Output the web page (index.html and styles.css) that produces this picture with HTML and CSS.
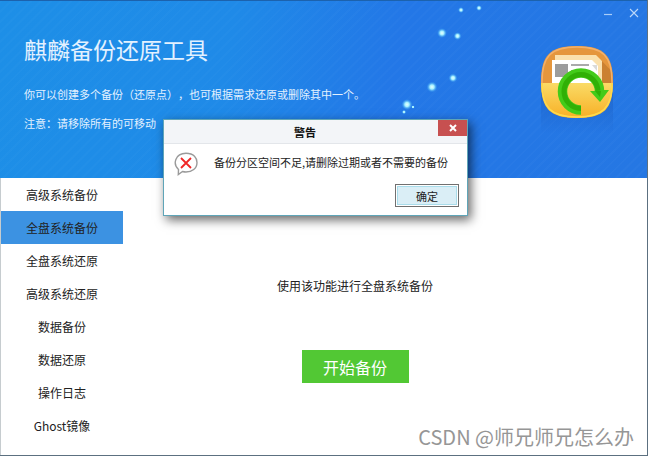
FILE: index.html
```
<!DOCTYPE html>
<html lang="zh-CN">
<head>
  <meta charset="UTF-8" />
  <meta name="viewport" content="width=device-width, initial-scale=1.0"/>
  <title>麒麟备份还原工具</title>
  <link rel="stylesheet" href="styles.css">
</head>
<body>
  <div class="window">
    <header class="banner">
      <svg class="stars" width="100" height="118" viewBox="0 0 100 118" aria-hidden="true">
        <defs>
          <radialGradient id="glow">
            <stop offset="0" stop-color="#e8ffff"/>
            <stop offset="0.4" stop-color="#a5f0ff"/>
            <stop offset="1" stop-color="#2a9cf5" stop-opacity="0"/>
          </radialGradient>
        </defs>
        <g fill="url(#glow)">
          <circle cx="61" cy="9" r="3"/>
          <circle cx="79" cy="7" r="3"/>
          <circle cx="42" cy="32" r="5"/>
          <circle cx="57.5" cy="35" r="4"/>
          <circle cx="53" cy="77" r="4.5"/>
          <circle cx="32" cy="86" r="5.5"/>
          <circle cx="7" cy="103.5" r="5.5"/>
          <circle cx="13" cy="106" r="1.8"/>
          <circle cx="4" cy="111" r="2.2"/>
        </g>
      </svg>

      <div class="intro">
        <h1>麒麟备份还原工具</h1>
        <p>你可以创建多个备份（还原点），也可根据需求还原或删除其中一个。</p>
        <p>注意：请移除所有的可移动</p>
      </div>

      <div class="banner-side">
        <div class="window-controls">
          <button type="button" aria-label="最小化">
            <svg width="10" height="10" viewBox="0 0 10 10"><path d="M1 6.5h8" stroke="#a9cdf7" stroke-width="1.2"/></svg>
          </button>
          <button type="button" aria-label="关闭">
            <svg width="10" height="10" viewBox="0 0 10 10"><path d="M1 1l8 8M9 1l-8 8" stroke="#bcd8f9" stroke-width="1.1"/></svg>
          </button>
        </div>
        <svg class="logo" width="76" height="94" viewBox="0 0 76 94" aria-hidden="true">
          <defs>
            <linearGradient id="pocket" x1="0" y1="0" x2="0" y2="1">
              <stop offset="0" stop-color="#fadb66"/>
              <stop offset="1" stop-color="#f7ad22"/>
            </linearGradient>
            <linearGradient id="shade" x1="0" y1="0" x2="0" y2="1">
              <stop offset="0" stop-color="#1c5fc4" stop-opacity="0.7"/>
              <stop offset="1" stop-color="#1c5fc4" stop-opacity="0"/>
            </linearGradient>
            <clipPath id="tile">
              <path d="M37 2C64 2 73 11 73 38S64 74 37 74 1 65 1 38 10 2 37 2z"/>
            </clipPath>
          </defs>
          <path d="M1 44h72v46H1z" fill="url(#shade)"/>
          <g clip-path="url(#tile)">
            <path d="M0 0h76v40H0z" fill="#e5963c"/>
            <path d="M61 16l14 15v10H56z" fill="#cb8131"/>
            <path d="M15 11h41l6 6v24H15z" fill="#fae0ac"/>
            <path d="M12 16h40l6 6v18H12z" fill="#fff"/>
            <path d="M52 21l5 6v-6z" fill="#dadada"/>
            <path d="M15 20h13v13H15z" fill="#9c9c9c"/>
            <path d="M31 20h18v2H31zM31 26h8v2h-8z" fill="#aaa"/>
            <path d="M0 39h76v37H0z" fill="url(#pocket)"/>
          </g>
          <path d="M37 3C63 3 72 12 72 38S63 73 37 73 2 64 2 38 11 3 37 3z" fill="none" stroke="#f3b06a" stroke-width="1.5"/>
          <path d="M2 39C2 64 11 73 37 73S72 64 72 39" fill="none" stroke="#ffdc45" stroke-width="1.5"/>
          <path d="M41 66A18.5 18.5 0 1 1 59.5 47.5" fill="none" stroke="#43cb19" stroke-width="9.5"/>
          <path d="M41 64.500A17 17 0 1 1 58 47.5" fill="none" stroke="#30b006" stroke-width="5"/>
          <path d="M50 47h5l9.500-1h4.500l-9 12z" fill="#43cb19"/>
          <path d="M55 47h6l-1 6z" fill="#30b006"/>
        </svg>
      </div>
    </header>

    <div class="content">
      <nav class="sidebar">
        <a href="#">高级系统备份</a>
        <a href="#" class="active">全盘系统备份</a>
        <a href="#">全盘系统还原</a>
        <a href="#">高级系统还原</a>
        <a href="#">数据备份</a>
        <a href="#">数据还原</a>
        <a href="#">操作日志</a>
        <a href="#">Ghost镜像</a>
      </nav>
      <main class="panel">
        <p>使用该功能进行全盘系统备份</p>
        <button type="button" class="start-btn">开始备份</button>
      </main>
    </div>

    <div class="dialog" role="alertdialog" aria-labelledby="dialogTitle">
      <div class="dialog-head">
        <h2 id="dialogTitle">警告</h2>
        <button type="button" class="dialog-close" aria-label="关闭">
          <svg width="8" height="8" viewBox="0 0 8 8"><path d="M1 1l6 6M7 1L1 7" stroke="#fff" stroke-width="2"/></svg>
        </button>
      </div>
      <div class="dialog-body">
        <svg width="24" height="24" viewBox="0 0 24 24" aria-hidden="true">
          <path d="M4.5 17.5C-1.5 12 1 1.5 12 1.3c8 0 11 5 11 9.2 0 6-5 9.5-11 9.5-1.500 0-2.500-.2-3.500-.5L4.3 22.5z" fill="#fff" stroke="#9a9a9a" stroke-width="1.4"/>
          <path d="M7 6l10 10M17 6L7 16" stroke="#f02727" stroke-width="1.8"/>
        </svg>
        <p>备份分区空间不足,请删除过期或者不需要的备份</p>
      </div>
      <div class="dialog-foot">
        <button type="button" class="ok-btn">确定</button>
      </div>
    </div>

    <div class="watermark">CSDN @师兄师兄怎么办</div>
  </div>
</body>
</html>
```

FILE: styles.css
```
:root {
  --frame: #5c7080;
  --text: #222;
  --blue: #3c92e2;
  --green: #52c834;
}

* {
  box-sizing: border-box;
}

body {
  margin: 0;
  font-family: "Noto Sans CJK SC", "Noto Sans", sans-serif;
  font-size: 11px;
  color: var(--text);
  background: #fff;
}

h1, h2, p {
  margin: 0;
  font-weight: 400;
}

button {
  font-family: inherit;
  padding: 0;
  border: none;
  background: none;
  cursor: pointer;
}

svg {
  display: block;
}

.window {
  position: relative;
  display: flex;
  flex-direction: column;
  min-height: 100vh;
  border-right: 1px solid var(--frame);
  border-bottom: 1px solid var(--frame);
}

/* banner */
.banner {
  position: relative;
  display: flex;
  justify-content: space-between;
  height: 178px;
  padding-left: 24px;
  color: #e3f1ff;
  border-top: 1px solid #1c62ad;
  background:
    repeating-linear-gradient(135deg, rgba(255,255,255,0.02) 0 2px, transparent 2px 7px),
    linear-gradient(100deg, #1d8fe7 0%, #1f8ae8 35%, #2377e7 60%, #2577e3 100%);
}

.stars {
  position: absolute;
  left: 400px;
  top: 0;
}

.intro {
  text-spacing-trim: space-all;
}

.intro h1 {
  margin-top: 30px;
  font-size: 23px;
  line-height: 36px;
}

.intro p {
  line-height: 29px;
}

.intro h1 + p {
  margin-top: 13px;
}

.banner-side {
  display: flex;
  flex-direction: column;
  align-items: flex-end;
  gap: 26px;
  padding: 7px 8px 0 0;
}

.window-controls {
  display: flex;
  gap: 16px;
}

.logo {
  margin-right: 23px;
}

/* content */
.content {
  flex: 1;
  display: flex;
  font-size: 12px;
}

.sidebar {
  width: 123px;
  border-left: 1px solid #c6cccf;
}

.sidebar a {
  display: block;
  line-height: 33px;
  text-align: center;
  color: var(--text);
  text-decoration: none;
}

.sidebar a.active {
  background: var(--blue);
}

.panel {
  flex: 1;
  display: flex;
  flex-direction: column;
  align-items: center;
  gap: 56px;
  padding: 100px 60px 0 0;
}

.panel p {
  line-height: 16px;
}

.start-btn {
  width: 107px;
  height: 33px;
  font-size: 16px;
  color: #fff;
  background: var(--green);
}

/* warning dialog */
.dialog {
  position: absolute;
  left: 163px;
  top: 119px;
  width: 305px;
  background: #fff;
  border: 1px solid #5fa5b8;
  box-shadow: 3px 4px 10px rgba(0,0,0,0.6);
}

.dialog-head {
  display: flex;
  height: 24px;
  padding-left: 8px;
  background: #f3f5f8;
  border-bottom: 1px solid #e3e6ea;
}

.dialog-head h2 {
  flex: 1;
  font-size: 11px;
  font-weight: 700;
  line-height: 24px;
  text-align: center;
  color: #111;
}

.dialog-close {
  display: flex;
  align-items: center;
  justify-content: center;
  width: 29px;
  height: 16px;
  background: #c75050;
}

.dialog-body {
  display: flex;
  gap: 16px;
  padding: 8px 8px 0 10px;
}

.dialog-body p {
  line-height: 20px;
}

.dialog-foot {
  display: flex;
  justify-content: flex-end;
  padding: 8px;
}

.ok-btn {
  width: 64px;
  height: 23px;
  font-size: 11px;
  color: var(--text);
  background: #daeef6;
  border: 1px solid #707070;
  box-shadow: inset 0 0 0 1px #fff, inset 0 0 0 2px #a9dcea;
}

.watermark {
  position: absolute;
  right: 13px;
  bottom: 4px;
  font-size: 20px;
  line-height: 28px;
  color: #969696;
  text-shadow: 1px 1px 0 #fff;
}
```
